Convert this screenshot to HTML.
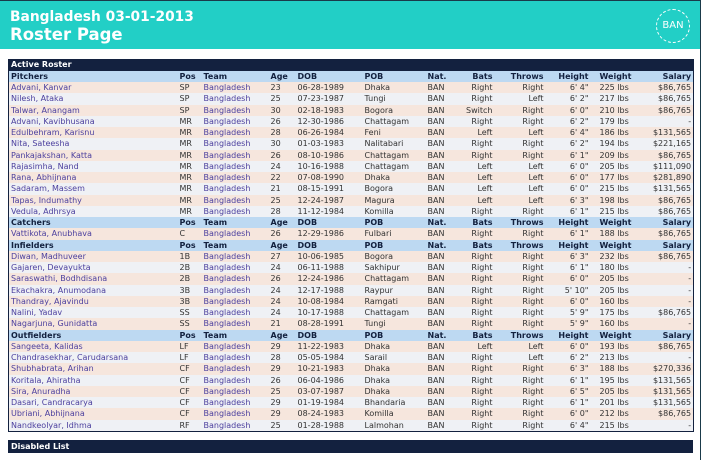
<!DOCTYPE html>
<html><head><meta charset="utf-8"><style>
*{margin:0;padding:0;box-sizing:border-box}
body{width:701px;height:460px;background:#fff;font-family:"DejaVu Sans","Liberation Sans",sans-serif;overflow:hidden;position:relative;border-top:1px solid #1a3a4a;border-right:1px solid #1a3a4a}
.hd{position:absolute;left:0;top:0;width:700px;height:48px;background:#22cfc6;color:#fff;font-weight:bold}
.t1{position:absolute;left:10px;top:8px;font-size:13.8px}
.t2{position:absolute;left:10px;top:24px;font-size:16.5px}
.ban{position:absolute;left:656px;top:8px;width:34px;height:34px;border:1.5px dashed #fff;border-radius:50%;font-size:10px;font-weight:normal;text-align:center;line-height:31px}
table{position:absolute;left:8px;top:58px;width:685px;border-collapse:collapse;table-layout:fixed;font-size:8px;border:1px solid #13213f}
tr{height:11.25px}
td{height:11.25px;padding:0 2px;white-space:nowrap;overflow:hidden;line-height:11px;color:#333}
tr.a td{background:#f6e6dd}tr.b td{background:#eff1f5}
tr.h td{background:#bdd9f2;font-weight:bold;color:#13213f}
tr.top td{background:#13213f;color:#fff;font-weight:bold;height:10px;line-height:10px}
td.n,td.t{color:#4b3f9e}
.r{text-align:right}
.w{padding-left:9px}
.dl{position:absolute;left:8px;top:439px;width:685px;height:13px;background:#13213f;color:#fff;font-weight:bold;font-size:8px;padding:2px 3px}
</style></head><body>
<div class="hd"><div class="t1">Bangladesh 03-01-2013</div><div class="t2">Roster Page</div><div class="ban">BAN</div></div>
<table>
<colgroup><col style="width:169px"><col style="width:24px"><col style="width:67px"><col style="width:27px"><col style="width:67px"><col style="width:63px"><col style="width:35px"><col style="width:34px"><col style="width:51px"><col style="width:45px"><col style="width:50px"><col style="width:53px"></colgroup>
<tr class="top"><td colspan="12">Active Roster</td></tr>
<tr class="h"><td>Pitchers</td><td>Pos</td><td>Team</td><td>Age</td><td>DOB</td><td>POB</td><td>Nat.</td><td class="r">Bats</td><td class="r">Throws</td><td class="r">Height</td><td class="w">Weight</td><td class="r">Salary</td></tr>
<tr class="a"><td class="n">Advani, Kanvar</td><td>SP</td><td class="t">Bangladesh</td><td>23</td><td>06-28-1989</td><td>Dhaka</td><td>BAN</td><td class="r">Right</td><td class="r">Right</td><td class="r">6' 4"</td><td class="w">225 lbs</td><td class="r">$86,765</td></tr>
<tr class="b"><td class="n">Nilesh, Ataka</td><td>SP</td><td class="t">Bangladesh</td><td>25</td><td>07-23-1987</td><td>Tungi</td><td>BAN</td><td class="r">Right</td><td class="r">Left</td><td class="r">6' 2"</td><td class="w">217 lbs</td><td class="r">$86,765</td></tr>
<tr class="a"><td class="n">Talwar, Anangam</td><td>SP</td><td class="t">Bangladesh</td><td>30</td><td>02-18-1983</td><td>Bogora</td><td>BAN</td><td class="r">Switch</td><td class="r">Right</td><td class="r">6' 0"</td><td class="w">210 lbs</td><td class="r">$86,765</td></tr>
<tr class="b"><td class="n">Advani, Kavibhusana</td><td>MR</td><td class="t">Bangladesh</td><td>26</td><td>12-30-1986</td><td>Chattagam</td><td>BAN</td><td class="r">Right</td><td class="r">Right</td><td class="r">6' 2"</td><td class="w">179 lbs</td><td class="r">-</td></tr>
<tr class="a"><td class="n">Edulbehram, Karisnu</td><td>MR</td><td class="t">Bangladesh</td><td>28</td><td>06-26-1984</td><td>Feni</td><td>BAN</td><td class="r">Left</td><td class="r">Left</td><td class="r">6' 4"</td><td class="w">186 lbs</td><td class="r">$131,565</td></tr>
<tr class="b"><td class="n">Nita, Sateesha</td><td>MR</td><td class="t">Bangladesh</td><td>30</td><td>01-03-1983</td><td>Nalitabari</td><td>BAN</td><td class="r">Right</td><td class="r">Right</td><td class="r">6' 2"</td><td class="w">194 lbs</td><td class="r">$221,165</td></tr>
<tr class="a"><td class="n">Pankajakshan, Katta</td><td>MR</td><td class="t">Bangladesh</td><td>26</td><td>08-10-1986</td><td>Chattagam</td><td>BAN</td><td class="r">Right</td><td class="r">Right</td><td class="r">6' 1"</td><td class="w">209 lbs</td><td class="r">$86,765</td></tr>
<tr class="b"><td class="n">Rajasimha, Nand</td><td>MR</td><td class="t">Bangladesh</td><td>24</td><td>10-16-1988</td><td>Chattagam</td><td>BAN</td><td class="r">Left</td><td class="r">Left</td><td class="r">6' 0"</td><td class="w">205 lbs</td><td class="r">$111,090</td></tr>
<tr class="a"><td class="n">Rana, Abhijnana</td><td>MR</td><td class="t">Bangladesh</td><td>22</td><td>07-08-1990</td><td>Dhaka</td><td>BAN</td><td class="r">Left</td><td class="r">Left</td><td class="r">6' 0"</td><td class="w">177 lbs</td><td class="r">$281,890</td></tr>
<tr class="b"><td class="n">Sadaram, Massem</td><td>MR</td><td class="t">Bangladesh</td><td>21</td><td>08-15-1991</td><td>Bogora</td><td>BAN</td><td class="r">Left</td><td class="r">Left</td><td class="r">6' 0"</td><td class="w">215 lbs</td><td class="r">$131,565</td></tr>
<tr class="a"><td class="n">Tapas, Indumathy</td><td>MR</td><td class="t">Bangladesh</td><td>25</td><td>12-24-1987</td><td>Magura</td><td>BAN</td><td class="r">Left</td><td class="r">Left</td><td class="r">6' 3"</td><td class="w">198 lbs</td><td class="r">$86,765</td></tr>
<tr class="b"><td class="n">Vedula, Adhrsya</td><td>MR</td><td class="t">Bangladesh</td><td>28</td><td>11-12-1984</td><td>Komilla</td><td>BAN</td><td class="r">Right</td><td class="r">Right</td><td class="r">6' 1"</td><td class="w">215 lbs</td><td class="r">$86,765</td></tr>
<tr class="h"><td>Catchers</td><td>Pos</td><td>Team</td><td>Age</td><td>DOB</td><td>POB</td><td>Nat.</td><td class="r">Bats</td><td class="r">Throws</td><td class="r">Height</td><td class="w">Weight</td><td class="r">Salary</td></tr>
<tr class="a"><td class="n">Vattikota, Anubhava</td><td>C</td><td class="t">Bangladesh</td><td>26</td><td>12-29-1986</td><td>Fulbari</td><td>BAN</td><td class="r">Right</td><td class="r">Right</td><td class="r">6' 1"</td><td class="w">188 lbs</td><td class="r">$86,765</td></tr>
<tr class="h"><td>Infielders</td><td>Pos</td><td>Team</td><td>Age</td><td>DOB</td><td>POB</td><td>Nat.</td><td class="r">Bats</td><td class="r">Throws</td><td class="r">Height</td><td class="w">Weight</td><td class="r">Salary</td></tr>
<tr class="a"><td class="n">Diwan, Madhuveer</td><td>1B</td><td class="t">Bangladesh</td><td>27</td><td>10-06-1985</td><td>Bogora</td><td>BAN</td><td class="r">Right</td><td class="r">Right</td><td class="r">6' 3"</td><td class="w">232 lbs</td><td class="r">$86,765</td></tr>
<tr class="b"><td class="n">Gajaren, Devayukta</td><td>2B</td><td class="t">Bangladesh</td><td>24</td><td>06-11-1988</td><td>Sakhipur</td><td>BAN</td><td class="r">Right</td><td class="r">Right</td><td class="r">6' 1"</td><td class="w">180 lbs</td><td class="r">-</td></tr>
<tr class="a"><td class="n">Saraswathi, Bodhdisana</td><td>2B</td><td class="t">Bangladesh</td><td>26</td><td>12-24-1986</td><td>Chattagam</td><td>BAN</td><td class="r">Right</td><td class="r">Right</td><td class="r">6' 0"</td><td class="w">205 lbs</td><td class="r">-</td></tr>
<tr class="b"><td class="n">Ekachakra, Anumodana</td><td>3B</td><td class="t">Bangladesh</td><td>24</td><td>12-17-1988</td><td>Raypur</td><td>BAN</td><td class="r">Right</td><td class="r">Right</td><td class="r">5' 10"</td><td class="w">205 lbs</td><td class="r">-</td></tr>
<tr class="a"><td class="n">Thandray, Ajavindu</td><td>3B</td><td class="t">Bangladesh</td><td>24</td><td>10-08-1984</td><td>Ramgati</td><td>BAN</td><td class="r">Right</td><td class="r">Right</td><td class="r">6' 0"</td><td class="w">160 lbs</td><td class="r">-</td></tr>
<tr class="b"><td class="n">Nalini, Yadav</td><td>SS</td><td class="t">Bangladesh</td><td>24</td><td>10-17-1988</td><td>Chattagam</td><td>BAN</td><td class="r">Right</td><td class="r">Right</td><td class="r">5' 9"</td><td class="w">175 lbs</td><td class="r">$86,765</td></tr>
<tr class="a"><td class="n">Nagarjuna, Gunidatta</td><td>SS</td><td class="t">Bangladesh</td><td>21</td><td>08-28-1991</td><td>Tungi</td><td>BAN</td><td class="r">Right</td><td class="r">Right</td><td class="r">5' 9"</td><td class="w">160 lbs</td><td class="r">-</td></tr>
<tr class="h"><td>Outfielders</td><td>Pos</td><td>Team</td><td>Age</td><td>DOB</td><td>POB</td><td>Nat.</td><td class="r">Bats</td><td class="r">Throws</td><td class="r">Height</td><td class="w">Weight</td><td class="r">Salary</td></tr>
<tr class="a"><td class="n">Sangeeta, Kalidas</td><td>LF</td><td class="t">Bangladesh</td><td>29</td><td>11-22-1983</td><td>Dhaka</td><td>BAN</td><td class="r">Left</td><td class="r">Left</td><td class="r">6' 0"</td><td class="w">193 lbs</td><td class="r">$86,765</td></tr>
<tr class="b"><td class="n">Chandrasekhar, Carudarsana</td><td>LF</td><td class="t">Bangladesh</td><td>28</td><td>05-05-1984</td><td>Sarail</td><td>BAN</td><td class="r">Right</td><td class="r">Left</td><td class="r">6' 2"</td><td class="w">213 lbs</td><td class="r">-</td></tr>
<tr class="a"><td class="n">Shubhabrata, Arihan</td><td>CF</td><td class="t">Bangladesh</td><td>29</td><td>10-21-1983</td><td>Dhaka</td><td>BAN</td><td class="r">Right</td><td class="r">Right</td><td class="r">6' 3"</td><td class="w">188 lbs</td><td class="r">$270,336</td></tr>
<tr class="b"><td class="n">Koritala, Ahiratha</td><td>CF</td><td class="t">Bangladesh</td><td>26</td><td>06-04-1986</td><td>Dhaka</td><td>BAN</td><td class="r">Right</td><td class="r">Right</td><td class="r">6' 1"</td><td class="w">195 lbs</td><td class="r">$131,565</td></tr>
<tr class="a"><td class="n">Sira, Anuradha</td><td>CF</td><td class="t">Bangladesh</td><td>25</td><td>03-07-1987</td><td>Dhaka</td><td>BAN</td><td class="r">Right</td><td class="r">Right</td><td class="r">6' 5"</td><td class="w">205 lbs</td><td class="r">$131,565</td></tr>
<tr class="b"><td class="n">Dasari, Candracarya</td><td>CF</td><td class="t">Bangladesh</td><td>29</td><td>01-19-1984</td><td>Bhandaria</td><td>BAN</td><td class="r">Right</td><td class="r">Right</td><td class="r">6' 1"</td><td class="w">201 lbs</td><td class="r">$131,565</td></tr>
<tr class="a"><td class="n">Ubriani, Abhijnana</td><td>CF</td><td class="t">Bangladesh</td><td>29</td><td>08-24-1983</td><td>Komilla</td><td>BAN</td><td class="r">Right</td><td class="r">Right</td><td class="r">6' 0"</td><td class="w">212 lbs</td><td class="r">$86,765</td></tr>
<tr class="b"><td class="n">Nandkeolyar, Idhma</td><td>RF</td><td class="t">Bangladesh</td><td>25</td><td>01-28-1988</td><td>Lalmohan</td><td>BAN</td><td class="r">Right</td><td class="r">Right</td><td class="r">6' 4"</td><td class="w">215 lbs</td><td class="r">-</td></tr>
</table>
<div class="dl">Disabled List</div>
</body></html>
